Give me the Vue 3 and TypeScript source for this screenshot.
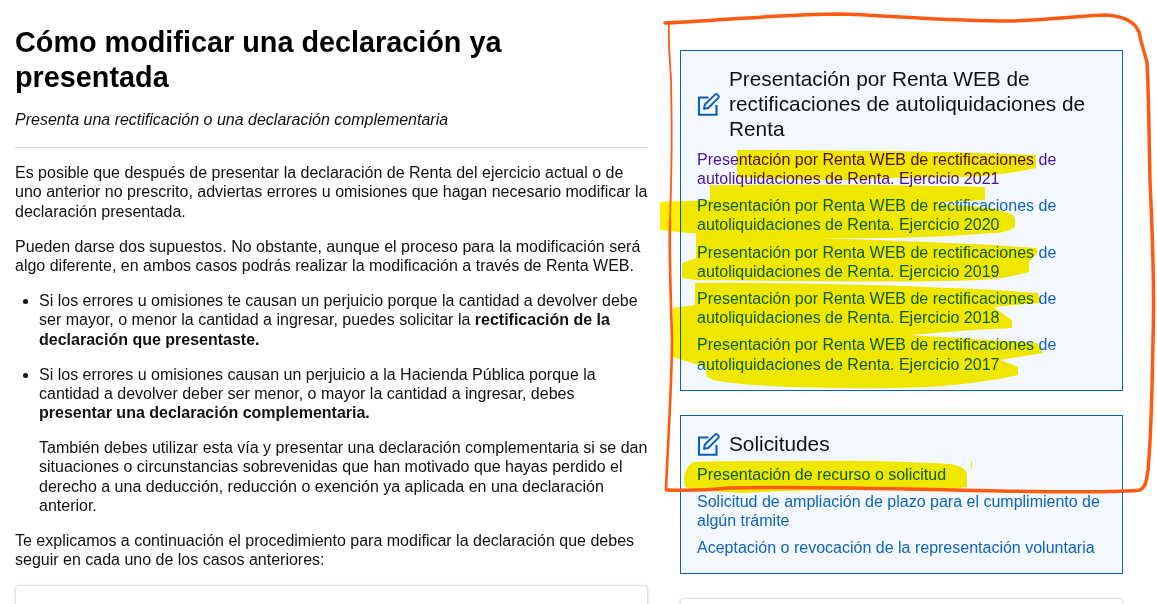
<script setup lang="ts">
interface Box { title: string; links: { text: string; visited?: boolean }[] }
const rect = 'Presentación por Renta WEB de rectificaciones de autoliquidaciones de Renta. Ejercicio '
const boxes: Box[] = [
  {
    title: 'Presentación por Renta WEB de rectificaciones de autoliquidaciones de Renta',
    links: [
      { text: rect + '2021', visited: true },
      { text: rect + '2020' },
      { text: rect + '2019' },
      { text: rect + '2018' },
      { text: rect + '2017' },
    ],
  },
  {
    title: 'Solicitudes',
    links: [
      { text: 'Presentación de recurso o solicitud' },
      { text: 'Solicitud de ampliación de plazo para el cumplimiento de algún trámite' },
      { text: 'Aceptación o revocación de la representación voluntaria' },
    ],
  },
]
</script>

<template>
  <div class="page">
    <main class="left">
      <h1>Cómo modificar una declaración ya presentada</h1>
      <p class="lead">Presenta una rectificación o una declaración complementaria</p>
      <hr />
      <p>Es posible que después de presentar la declaración de Renta del ejercicio actual o de uno anterior no prescrito, adviertas errores u omisiones que hagan necesario modificar la declaración presentada.</p>
      <p>Pueden darse dos supuestos. No obstante, aunque el proceso para la modificación será algo diferente, en ambos casos podrás realizar la modificación a través de Renta WEB.</p>
      <ul>
        <li>Si los errores u omisiones te causan un perjuicio porque la cantidad a devolver debe ser mayor, o menor la cantidad a ingresar, puedes solicitar la <strong>rectificación de la declaración que presentaste.</strong></li>
        <li>
          <p>Si los errores u omisiones causan un perjuicio a la Hacienda Pública porque la cantidad a devolver deber ser menor, o mayor la cantidad a ingresar, debes <strong>presentar una declaración complementaria.</strong></p>
          <p>También debes utilizar esta vía y presentar una declaración complementaria si se dan situaciones o circunstancias sobrevenidas que han motivado que hayas perdido el derecho a una deducción, reducción o exención ya aplicada en una declaración anterior.</p>
        </li>
      </ul>
      <p>Te explicamos a continuación el procedimiento para modificar la declaración que debes seguir en cada uno de los casos anteriores:</p>
      <div class="card"></div>
    </main>

    <aside class="right">
      <section v-for="box in boxes" :key="box.title" class="box">
        <h2>
          <svg class="icon" viewBox="0 0 23 23" fill="none" stroke="#0b5fb5" aria-hidden="true">
            <path d="M11.5 4.5H2v17.2h17.5V12" stroke-width="2.1" />
            <path d="M7 15.8l.9-4.3L18 1.6c.7-.7 1.6-.7 2.3 0l1 1c.7.7.7 1.6 0 2.3L11.3 15z" stroke-width="2" stroke-linejoin="round" />
          </svg>
          <span>{{ box.title }}</span>
        </h2>
        <a
          v-for="link in box.links"
          :key="link.text"
          href="#"
          class="link"
          :class="{ visited: link.visited }"
        >{{ link.text }}</a>
      </section>
      <div class="card"></div>
    </aside>

    <svg class="marks" viewBox="0 0 1157 604" aria-hidden="true">
      <g class="marker" fill="#fdee00">
        <path d="M737 150C800 150 950 151 1036 155L1036 168C1010 174 980 177 960 177C920 177 880 178 846 180C810 180 770 179 737 177Z" />
        <path d="M710 185C800 184 900 185 985 187L985 200L933 203L990 208C1010 212 1016 215 1015 220L1015 227C1010 231 1000 233 993 233C930 238 860 239 800 238C750 238 700 235 660 230L660 202L710 200Z" />
        <path d="M696 233C780 238 950 241 1036 248L1038 252L1029 262L1029 272C1010 277 1000 279 977 280C900 283 800 281 695 280L682 278L682 263L696 258Z" />
        <path d="M695 283C780 282 950 286 1038 293L1040 303L993 307L1012 320L1012 328L973 330L910 335L1037 343L1043 353L1000 360L1018 367L1018 375C990 381 960 385 927 387C880 389 847 388 847 388C800 388 760 386 733 383C720 382 712 380 707 377L705 367L673 357L673 308L695 305Z" />
        <path d="M693 462C720 461 760 461 800 461C860 460 920 462 950 464C962 466 967 470 967 475L967 487C950 490 900 490 850 490C800 490 760 492 743 493C720 492 695 490 685 487C683 478 684 468 693 462Z" />
        <path d="M971 461L972 461L972 468L971 468Z" />
      </g>
      <path
        class="pen"
        d="M665 23C700 22 780 14 840 14C880 15 950 21 1010 21C1050 20 1090 15 1105 15C1125 16 1135 22 1139 32C1141 42 1144 52 1147 62C1149 100 1149 140 1150 180C1152 230 1155 280 1153 340C1152 400 1151 440 1148 470C1146 482 1146 487 1140 490C1120 493 1060 492 1000 491C900 489 800 486 730 488C710 490 690 491 667 490"
      />
      <path class="pen-thin" d="M669 24C668 40 670 60 671 80C672 120 672 170 670 220" />
      <path class="pen-mid" d="M670 220C669 260 671 300 672 340C672 380 668 440 666 490" />
    </svg>
  </div>
</template>

<style scoped>
.page {
  position: relative;
  display: flex;
  gap: 32px;
  height: 604px;
  overflow: hidden;
  padding: 25px 34px 0 15px;
  box-sizing: border-box;
  background: #fff;
  color: #111;
  font: 16px/1.2 "Liberation Sans", Arial, sans-serif;
}
.left {
  flex: 0 0 633px;
  width: 633px;
}
h1 {
  margin: 0 0 15px;
  font-size: 28.8px;
  line-height: 35px;
  font-weight: 700;
  color: #000;
}
p {
  margin: 0 0 16px;
}
.lead {
  font-style: italic;
  margin: 0 0 18px;
}
hr {
  border: 0;
  border-top: 1px solid #ddd;
  margin: 0 0 15px;
}
ul {
  margin: 0 0 16px;
  padding-left: 24px;
}
li {
  margin-bottom: 16px;
}
li p:last-child {
  margin-bottom: 0;
}
.card {
  height: 60px;
  margin-top: 16px;
  background: #fff;
  border: 1px solid #e2e2e2;
  border-radius: 4px;
  box-shadow: 0 1px 3px rgba(0, 0, 0, 0.15);
}
.right {
  flex: 0 0 443px;
  width: 443px;
  margin-top: 25px;
}
.right .card {
  margin-top: 24px;
}
.box {
  box-sizing: border-box;
  background: #f2f8fd;
  border: 1px solid #0b62b8;
  padding: 16px;
  margin-bottom: 24px;
}
h2 {
  display: flex;
  align-items: center;
  gap: 9px;
  margin: 0 0 8px;
  font-size: 20.8px;
  line-height: 1.2;
  font-weight: 400;
  color: #111;
}
.icon {
  flex: 0 0 23px;
  width: 23px;
  height: 23px;
}
.link {
  display: block;
  color: #0f62be;
  text-decoration: none;
}
.link + .link {
  margin-top: 8px;
}
.link.visited {
  color: #4b0fa8;
}
.marks {
  position: absolute;
  inset: 0;
  width: 1157px;
  height: 604px;
  pointer-events: none;
}
.marker {
  mix-blend-mode: multiply;
}
.pen,
.pen-thin,
.pen-mid {
  fill: none;
  stroke: #ff5a12;
  stroke-linecap: round;
  stroke-linejoin: round;
}
.pen {
  stroke-width: 3.5;
}
.pen-thin {
  stroke-width: 1.8;
}
.pen-mid {
  stroke-width: 2.6;
}
</style>
